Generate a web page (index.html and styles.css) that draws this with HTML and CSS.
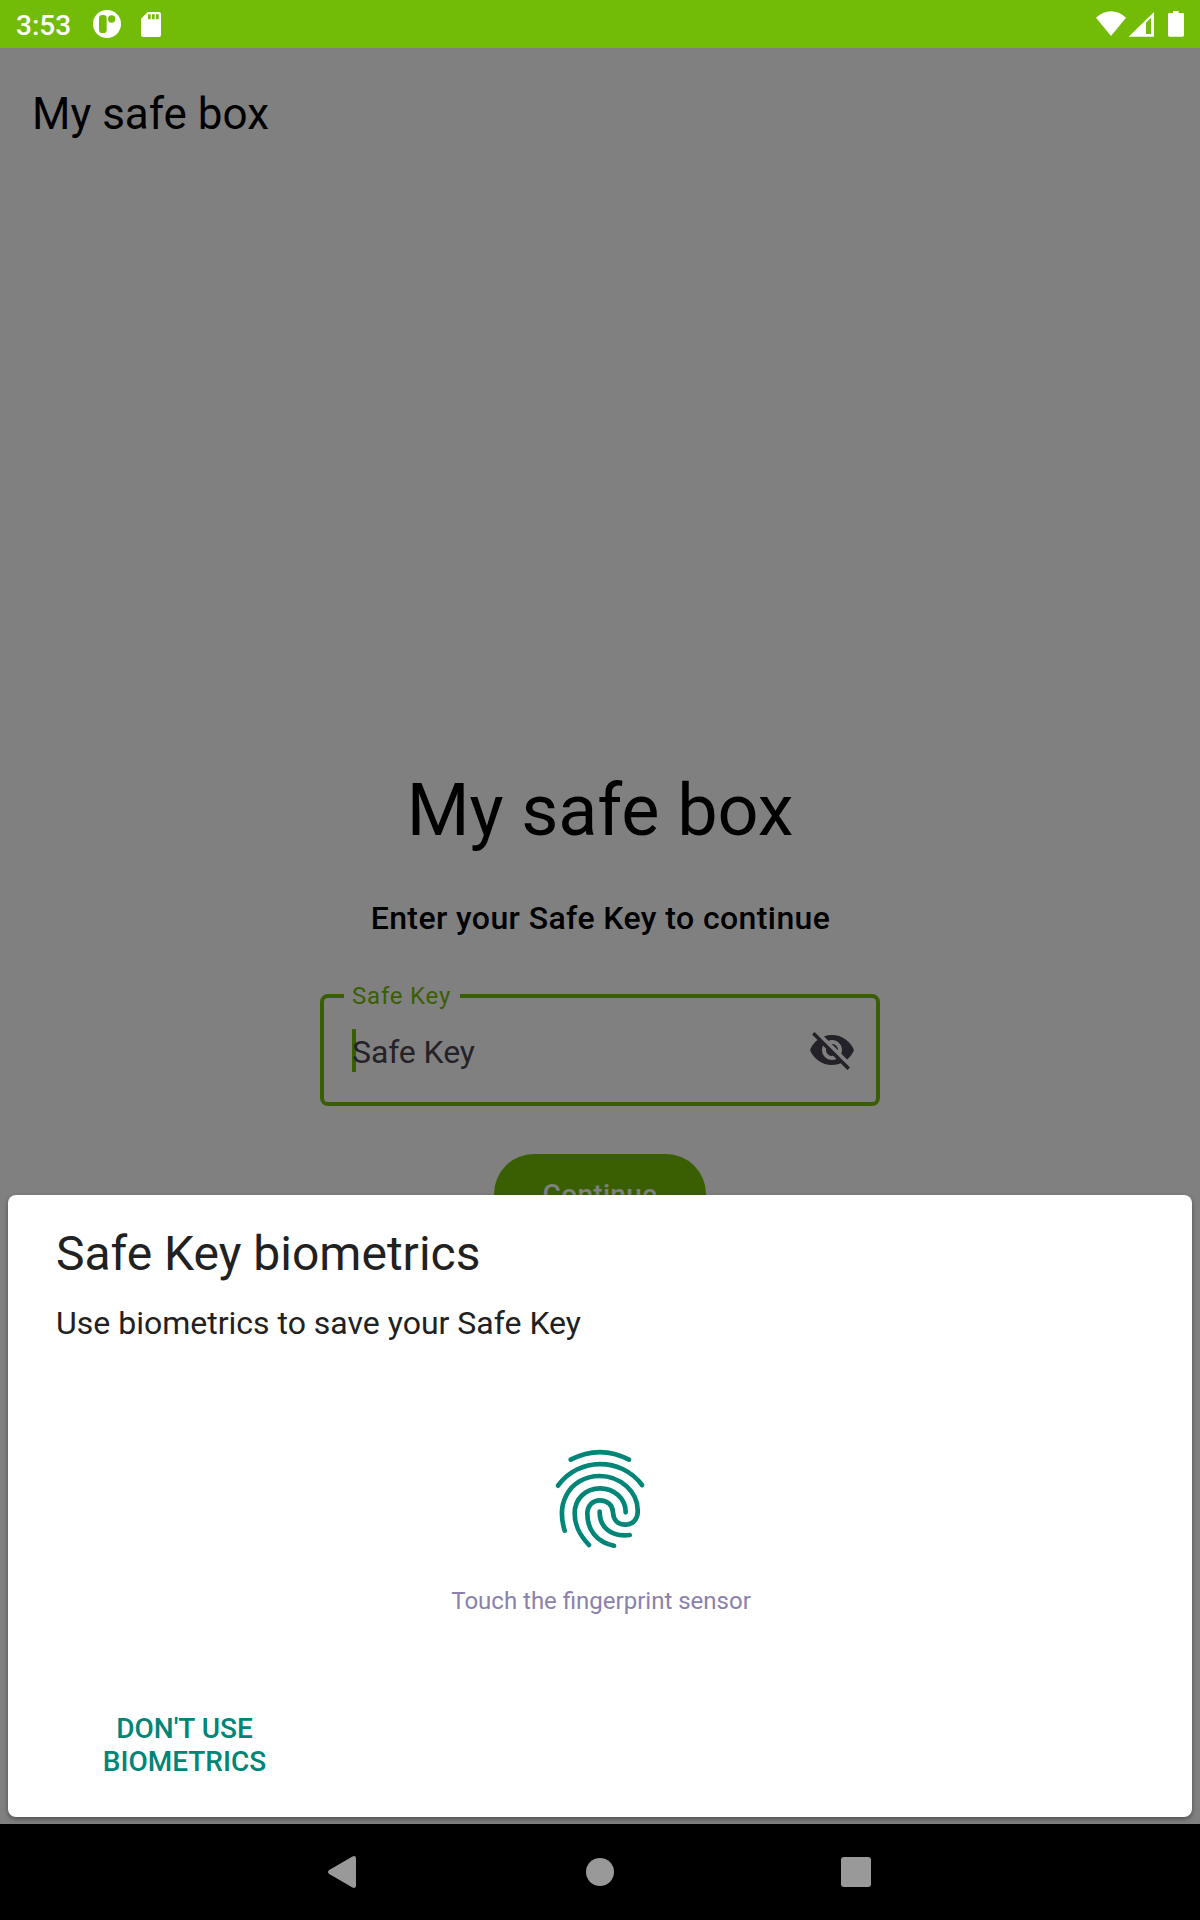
FILE: index.html
```html
<!DOCTYPE html>
<html lang="en">
<head>
<meta charset="utf-8">
<title>My safe box</title>
<link rel="stylesheet" href="styles.css">
</head>
<body>
<div class="screen">
  <header class="status-bar">
    <span class="clock">3:53</span>
    <svg class="status-app" width="28" height="28" viewBox="0 0 84 84">
      <circle cx="42" cy="42" r="42" fill="#fff"/>
      <rect class="cut" x="18" y="15" width="23" height="54" rx="10"/>
      <circle class="cut" cx="56" cy="27" r="11"/>
    </svg>
    <svg class="status-sd" width="20" height="25" viewBox="0 0 60 75">
      <path fill="#fff" d="M20 0H54Q60 0 60 6V69Q60 75 54 75H6Q0 75 0 69V20Z"/>
      <path class="cut" d="M21 7h8v15h-8zM33 7h8v15h-8zM45 7h8v15h-8z"/>
    </svg>
    <svg class="status-system" width="88" height="26" viewBox="0 0 264 78">
      <path fill="#fff" d="M0 20Q45-18 90 20L45 75Z"/>
      <path fill="#fff" d="M98 77L174 3V77Z"/>
      <path class="cut" d="M150 35L165 20V69H150Z"/>
      <path fill="#fff" d="M220 6H231V0H248V6H260Q264 6 264 10V73Q264 77 260 77H220Q216 77 216 73V10Q216 6 220 6Z"/>
    </svg>
  </header>

  <main class="app">
    <h1 class="app-title">My safe box</h1>
    <section class="unlock">
      <h2 class="unlock-title">My safe box</h2>
      <p class="unlock-hint">Enter your Safe Key to continue</p>
      <div class="field">
        <span class="field-label">Safe Key</span>
        <span class="field-value">Safe Key</span>
        <svg width="48" height="48" viewBox="0 0 24 24" fill="#242228"><path d="M12 7c2.76 0 5 2.24 5 5 0 .65-.13 1.26-.36 1.83l2.92 2.92c1.51-1.26 2.7-2.89 3.43-4.75-1.73-4.39-6-7.5-11-7.5-1.4 0-2.74.25-3.98.7l2.16 2.16C10.74 7.13 11.35 7 12 7zM2 4.27l2.28 2.28.46.46C3.08 8.3 1.78 10.02 1 12c1.73 4.39 6 7.5 11 7.5 1.55 0 3.03-.3 4.38-.84l.42.42L19.73 22 21 20.73 3.27 3 2 4.27zM7.53 9.8l1.55 1.55c-.05.21-.08.43-.08.65 0 1.66 1.34 3 3 3 .22 0 .44-.03.65-.08l1.55 1.55c-.67.33-1.41.53-2.2.53-2.76 0-5-2.24-5-5 0-.79.2-1.53.53-2.2zm4.31-.78l3.15 3.15.02-.16c0-1.66-1.34-3-3-3l-.17.01z"/></svg>
      </div>
      <button class="continue">Continue</button>
    </section>

    <section class="sheet">
      <h2 class="sheet-title">Safe Key biometrics</h2>
      <p class="sheet-text">Use biometrics to save your Safe Key</p>
      <svg class="fingerprint" width="140" height="130" viewBox="0 0 420 390">
        <path d="M122 89C180 59 240 59 297 89"/>
        <path d="M84 167C146 81 274 81 336 165"/>
        <path d="M104 302C92 262 94 225 108 198C126 160 165 138 209 138C273 138 323 187 323 240C325 268 308 284 286 284C262 284 250 268 249 247C248 225 231 211 210 211C187 211 172 228 172 252C172 300 200 336 252 347"/>
        <path d="M177 345C146 312 134 285 134 250C134 205 168 175 210 175C252 175 287 205 287 247"/>
        <path d="M209 245C209 290 240 322 299 315"/>
      </svg>
      <p class="sensor-hint">Touch the fingerprint sensor</p>
      <button class="decline">Don't use<br>biometrics</button>
    </section>
  </main>

  <nav class="nav-bar">
    <svg width="28" height="32" viewBox="0 0 28 32"><path d="M24.500 .4Q28-.8 28 2.500V29.500Q28 32.800 24.500 31.600L1.200 18Q-1.200 16 1.200 14Z"/></svg>
    <svg width="30" height="28" viewBox="0 0 30 28"><circle cx="16" cy="14" r="14"/></svg>
    <svg width="30" height="30" viewBox="0 0 30 30"><rect width="30" height="30" rx="3"/></svg>
  </nav>
</div>
</body>
</html>
```
FILE: styles.css
```css
* { box-sizing: border-box; }

body {
  margin: 0;
  font-family: Roboto, "Liberation Sans", sans-serif;
}

h1, h2, p { margin: 0; font-weight: 400; }

button {
  border: 0;
  padding: 0;
  font: inherit;
}

.screen {
  display: flex;
  flex-direction: column;
  width: 1200px;
  height: 1920px;
  overflow: hidden;
}

.status-bar {
  display: flex;
  flex: 0 0 48px;
  align-items: flex-start;
  padding: 10px 16px 0;
  background: #72bb07;
}

.clock {
  width: 77px;
  color: #fff;
  font-size: 28px;
  font-weight: 500;
  line-height: 32px;
}

.cut { fill: #72bb07; }
.status-sd { margin: 2px 0 0 20px; }
.status-system { margin: 1px 0 0 auto; }

.app {
  position: relative;
  flex: 1;
  overflow: hidden;
  background: #808080;
  color: #000;
}

.app-title {
  height: 128px;
  padding-left: 32px;
  font-size: 44px;
  line-height: 133px;
}

.unlock {
  display: flex;
  flex-direction: column;
  align-items: center;
  padding-top: 591px;
}

.unlock-title {
  font-size: 72px;
  line-height: 88px;
  letter-spacing: -0.1px;
}

.unlock-hint {
  margin-top: 39px;
  padding-left: 1px;
  font-size: 32px;
  font-weight: 500;
  line-height: 48px;
  letter-spacing: 0.4px;
}

.field {
  position: relative;
  display: flex;
  align-items: center;
  justify-content: space-between;
  width: 560px;
  height: 112px;
  margin-top: 52px;
  padding: 0 20px 0 28px;
  border: 4px solid #3a5f03;
  border-radius: 8px;
}

.field-label {
  position: absolute;
  top: -18px;
  left: 20px;
  width: 116px;
  padding-left: 8px;
  background: #808080;
  color: #3a5f03;
  font-size: 24px;
  line-height: 32px;
  letter-spacing: 0.8px;
}

.field-value {
  height: 43px;
  margin-top: 1px;
  background: linear-gradient(#3a5f03, #3a5f03) 0 0 / 4px 100% no-repeat;
  color: #242228;
  font-size: 32px;
  line-height: 46px;
  letter-spacing: -0.1px;
}

.continue {
  width: 212px;
  height: 80px;
  margin-top: 48px;
  border-radius: 40px;
  background: #3a5f03;
  color: #808080;
  font-size: 28px;
  font-weight: 500;
  letter-spacing: 0.3px;
}

.sheet {
  position: absolute;
  right: 8px;
  bottom: 7px;
  left: 8px;
  display: flex;
  flex-direction: column;
  height: 622px;
  padding: 31px 48px 0;
  border-radius: 8px;
  background: #fff;
  color: #212121;
  box-shadow: 0 2px 5px rgba(0, 0, 0, 0.4);
}

.sheet-title {
  font-size: 48px;
  line-height: 56px;
}

.sheet-text {
  margin-top: 21px;
  font-size: 32px;
  line-height: 40px;
}

.fingerprint {
  align-self: center;
  margin-top: 87px;
  fill: none;
  stroke: #008577;
  stroke-width: 14;
  stroke-linecap: round;
}

.sensor-hint {
  margin-top: 25px;
  padding-left: 2px;
  color: #8a82ac;
  font-size: 24px;
  line-height: 32px;
  text-align: center;
}

.decline {
  align-self: flex-start;
  width: 257px;
  margin-top: 95px;
  background: none;
  color: #008577;
  font-size: 28px;
  font-weight: 500;
  line-height: 33px;
  text-transform: uppercase;
}

.nav-bar {
  display: flex;
  flex: 0 0 96px;
  align-items: center;
  justify-content: space-between;
  padding: 0 329px 0 328px;
  background: #000;
  fill: #999;
}
```
